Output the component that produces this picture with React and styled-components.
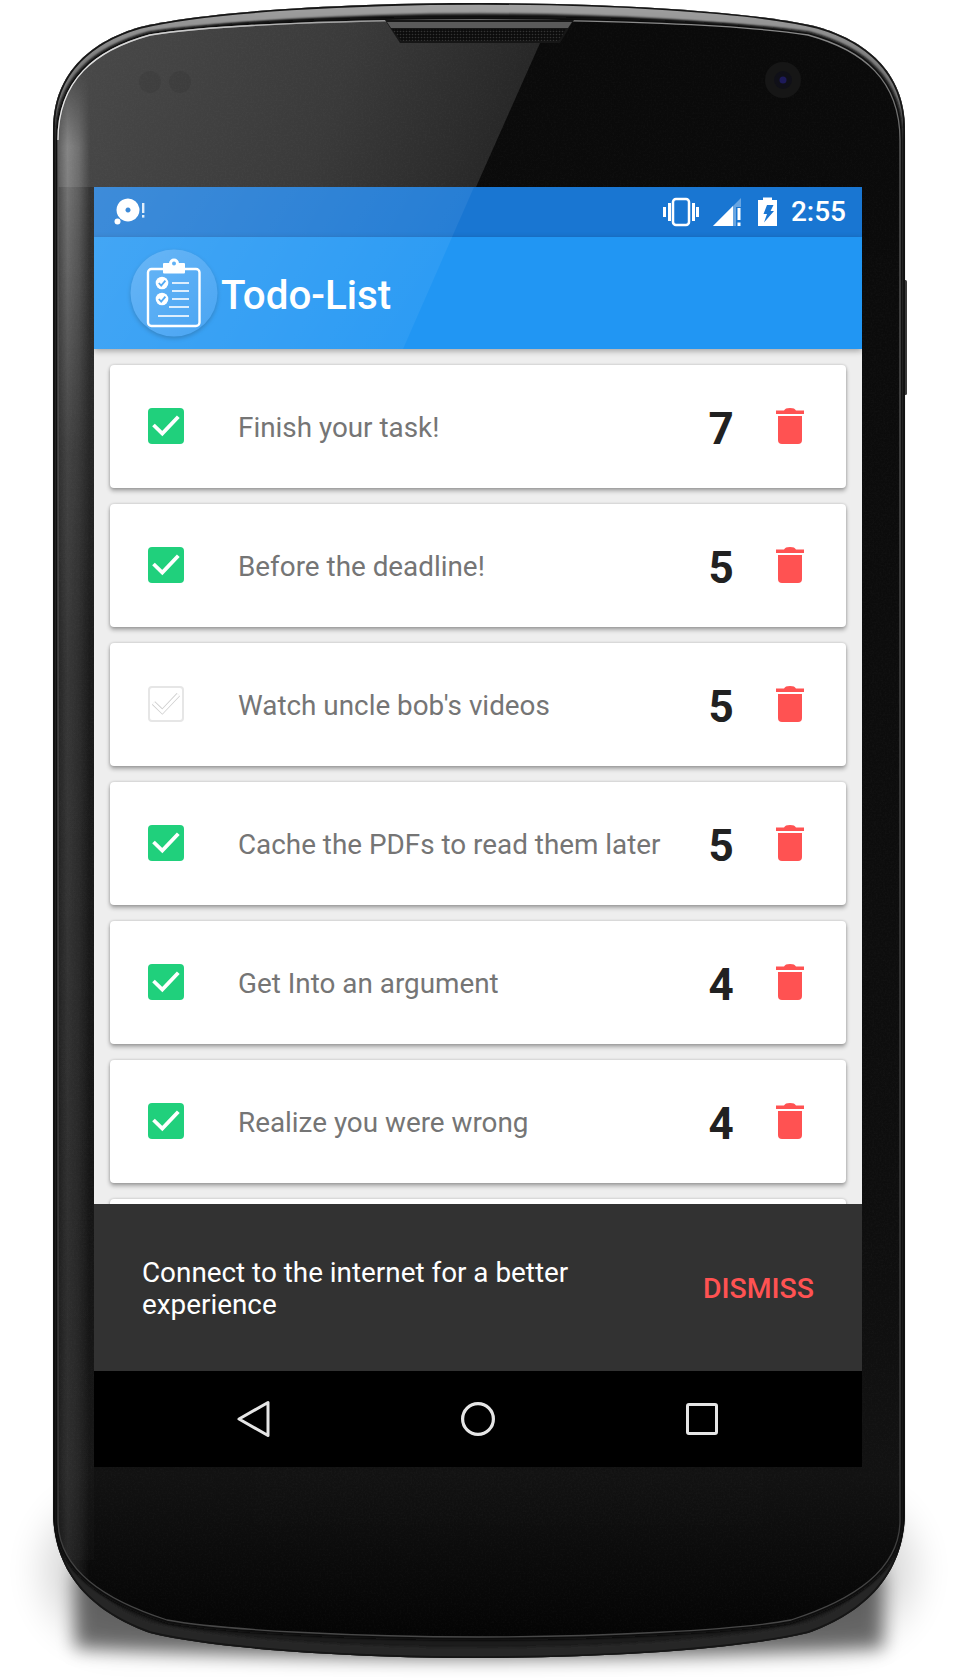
import React from "react"
import styled, { createGlobalStyle } from "styled-components";

const GlobalStyle = createGlobalStyle`
    html, body {
        margin:0;
        padding:0;
        background:white;
        font-family:Roboto, "Liberation Sans", sans-serif;
    }
`

const Stage = styled.div`
    position:relative;
    width:958px;
    height:1678px;
    padding:187px 0 0 94px;
    box-sizing:border-box;
    overflow:hidden;
`

const ShellDrawing = styled.svg`
    position:absolute;
    left:0;
    top:0;
`

const Screen = styled.div`
    position:relative;
    display:flex;
    flex-direction:column;
    width:768px;
    height:1280px;
    overflow:hidden;
    background:#eeeeee;
`

const Glare = styled.svg`
    position:absolute;
    left:0;
    top:0;
    z-index:3;
    pointer-events:none;
`

const StatusBar = styled.div`
    display:flex;
    align-items:center;
    justify-content:space-between;
    flex:0 0 50px;
    background:#1976d2;
    padding:0 16px 0 19px;
`

const StatusRight = styled.div`
    display:flex;
    align-items:center;
    gap:${props => props.$gap || 0}px;
`

const SignalGroup = styled.div`
    display:flex;
    align-items:center;
    gap:17px;
    margin-left:14px;
`

const Clock = styled.span`
    color:white;
    font-size:28px;
    font-weight:500;
    line-height:50px;
    margin-left:14px;
`

const AppBar = styled.div`
    position:relative;
    z-index:2;
    display:flex;
    align-items:center;
    flex:0 0 112px;
    background:#2196f3;
    padding-left:36px;
    box-shadow:0 2px 6px rgba(0,0,0,0.32);
`

const Logo = styled.svg`
    flex:none;
    filter:drop-shadow(0 2px 2px rgba(0,0,0,0.22));
`

const Title = styled.h1`
    margin:5px 0 0 3px;
    color:white;
    font-size:40.3px;
    font-weight:500;
`

const TodoList = styled.div`
    flex:1;
    display:flex;
    flex-direction:column;
    gap:16px;
    padding:16px 16px 0;
    overflow:hidden;
`

const Card = styled.div`
    flex:0 0 123px;
    display:flex;
    align-items:center;
    background:white;
    border-radius:4px;
    padding:0 42px 0 38px;
    box-shadow:0 3px 4px rgba(0,0,0,0.3), 0 0 3px rgba(0,0,0,0.2);
`

const Checkbox = styled.div`
    flex:none;
    width:36px;
    height:36px;
    margin-bottom:2px;
    box-sizing:border-box;
    border-radius:4px;
    background:${props => props.$checked ? "#20d07c" : "white"};
    border:${props => props.$checked ? "none" : "2px solid #e6e6e6"};
    display:flex;
    align-items:center;
    justify-content:center;
`

const TaskText = styled.span`
    flex:1;
    margin-left:54px;
    padding-top:2px;
    color:#757575;
    font-size:27.85px;
    white-space:nowrap;
`

const Score = styled.span`
    flex:0 0 56px;
    margin-right:27px;
    text-align:center;
    color:#212121;
    font-size:44px;
    font-weight:700;
    line-height:1;
    padding-top:4px;
`

const TrashSlot = styled.div`
    display:flex;
    margin-bottom:2px;
`

const Snackbar = styled.div`
    flex:0 0 167px;
    box-sizing:border-box;
    display:flex;
    align-items:center;
    justify-content:space-between;
    background:#323232;
    padding:2px 48px 0 48px;
    position:relative;
    z-index:2;
`

const SnackText = styled.p`
    margin:0;
    width:450px;
    color:white;
    font-size:27.85px;
    line-height:32px;
`

const SnackAction = styled.span`
    color:#ff5252;
    font-size:28.4px;
    font-weight:500;
`

const NavBar = styled.div`
    flex:0 0 96px;
    display:flex;
    align-items:center;
    justify-content:center;
    gap:188px;
    background:black;
    position:relative;
    z-index:2;
`

const OUTER = "M53 130 C53 70 95 40 140 27 C210 10 360 3 479 3 C598 3 748 10 818 27 C863 40 905 70 905 130 L905 1510 C905 1580 858 1615 808 1633 C738 1650 598 1658 479 1658 C360 1658 220 1650 150 1633 C100 1615 53 1580 53 1510 Z"
const INNER = "M58 140 C58 80 95 50 150 35 C220 24 360 20 479 20 C598 20 738 24 808 35 C863 50 900 80 900 140 L900 1520 C900 1570 853 1600 791 1620 C738 1630 598 1637 479 1637 C360 1637 220 1630 167 1620 C105 1600 58 1570 58 1520 Z"

const PhoneShell = () => (
    <ShellDrawing width="958" height="1678" viewBox="0 0 958 1678">
        <defs>
            <linearGradient id="rim" gradientUnits="userSpaceOnUse" x1="0" y1="0" x2="0" y2="1658">
                <stop offset="0" stopColor="#a4a4a4" />
                <stop offset="0.04" stopColor="#7a7a7a" />
                <stop offset="0.1" stopColor="#666666" />
                <stop offset="0.7" stopColor="#4a4a4a" />
                <stop offset="0.9" stopColor="#242424" />
                <stop offset="1" stopColor="#262626" />
            </linearGradient>
            <linearGradient id="glass" gradientUnits="userSpaceOnUse" x1="0" y1="20" x2="0" y2="1637">
                <stop offset="0" stopColor="#0a0a0a" />
                <stop offset="0.75" stopColor="#0e0e0e" />
                <stop offset="0.9" stopColor="#121212" />
                <stop offset="1" stopColor="#040404" />
            </linearGradient>
            <linearGradient id="reflection" gradientUnits="userSpaceOnUse" x1="60" y1="30" x2="500" y2="190">
                <stop offset="0" stopColor="#4a4a4a" />
                <stop offset="0.6" stopColor="#3a3a3a" />
                <stop offset="1" stopColor="#262626" />
            </linearGradient>
            <linearGradient id="leftFade" gradientUnits="userSpaceOnUse" x1="0" y1="187" x2="0" y2="1560">
                <stop offset="0" stopColor="white" stopOpacity="0.17" />
                <stop offset="0.35" stopColor="white" stopOpacity="0.06" />
                <stop offset="1" stopColor="white" stopOpacity="0.015" />
            </linearGradient>
            <linearGradient id="sideBand" gradientUnits="userSpaceOnUse" x1="58" y1="0" x2="90" y2="0">
                <stop offset="0" stopColor="white" stopOpacity="0.12" />
                <stop offset="0.3" stopColor="white" stopOpacity="0.34" />
                <stop offset="0.65" stopColor="white" stopOpacity="0.22" />
                <stop offset="1" stopColor="white" stopOpacity="0" />
            </linearGradient>
            <linearGradient id="sideFade" gradientUnits="userSpaceOnUse" x1="0" y1="70" x2="0" y2="1600">
                <stop offset="0" stopColor="white" stopOpacity="0" />
                <stop offset="0.05" stopColor="white" stopOpacity="1" />
                <stop offset="0.25" stopColor="white" stopOpacity="0.4" />
                <stop offset="1" stopColor="white" stopOpacity="0.3" />
            </linearGradient>
            <linearGradient id="edgeLine" gradientUnits="userSpaceOnUse" x1="0" y1="20" x2="0" y2="1637">
                <stop offset="0" stopColor="#8c8c8c" />
                <stop offset="0.1" stopColor="#5a5a5a" />
                <stop offset="0.9" stopColor="#3a3a3a" />
                <stop offset="1" stopColor="#484848" />
            </linearGradient>
            <linearGradient id="cornerLine" gradientUnits="userSpaceOnUse" x1="58" y1="0" x2="420" y2="0">
                <stop offset="0" stopColor="#e8e8e8" />
                <stop offset="0.5" stopColor="#bdbdbd" />
                <stop offset="1" stopColor="#bdbdbd" stopOpacity="0" />
            </linearGradient>
            <mask id="sideMask">
                <rect width="958" height="1678" fill="url(#sideFade)" />
            </mask>
            <clipPath id="outerClip"><path d={OUTER} /></clipPath>
            <clipPath id="innerClip"><path d={INNER} /></clipPath>
            <filter id="soft"><feGaussianBlur stdDeviation="1.2" /></filter>
            <filter id="shadowNear" x="-10%" y="-30%" width="120%" height="160%"><feGaussianBlur stdDeviation="9" /></filter>
            <filter id="shadowFar" x="-10%" y="-30%" width="120%" height="160%"><feGaussianBlur stdDeviation="20" /></filter>
            <filter id="grain" x="0" y="0" width="100%" height="100%">
                <feTurbulence type="fractalNoise" baseFrequency="0.55" numOctaves="2" seed="4" />
                <feColorMatrix values="0 0 0 0 1  0 0 0 0 1  0 0 0 0 1  0.5 0 0 0 -0.18" />
            </filter>
            <pattern id="mesh" width="3" height="3" patternUnits="userSpaceOnUse">
                <rect width="3" height="3" fill="#0c0c0c" />
                <circle cx="1.5" cy="1.5" r="0.8" fill="#333" />
            </pattern>
        </defs>

        <rect x="45" y="1500" width="868" height="140" rx="70" fill="black" opacity="0.16" filter="url(#shadowFar)" />
        <path d="M75 1570 H883 V1648 Q479 1668 75 1648 Z" fill="black" opacity="0.55" filter="url(#shadowNear)" />

        <rect x="903" y="280" width="4" height="115" rx="1.5" fill="#3c3c3c" />

        <path d={OUTER} fill="#1c1c1c" />
        <g clipPath="url(#outerClip)">
            <path d={OUTER} fill="none" stroke="url(#rim)" strokeWidth="21" filter="url(#soft)" />
            <path d={OUTER} fill="none" stroke="#161616" strokeWidth="3.5" />
        </g>
        <path d={INNER} fill="none" stroke="#080808" strokeWidth="7" filter="url(#soft)" />
        <path d={INNER} fill="url(#glass)" />

        <g clipPath="url(#innerClip)">
            <polygon points="0,0 540,0 540,43 476,187 0,187" fill="url(#reflection)" />
            <rect x="58" y="187" width="36" height="1373" fill="url(#leftFade)" />
            <rect x="58" y="0" width="34" height="1660" fill="url(#sideBand)" mask="url(#sideMask)" />
            <rect x="58" y="20" width="842" height="1617" filter="url(#grain)" opacity="0.1" />
        </g>
        <path d={INNER} fill="none" stroke="url(#edgeLine)" strokeWidth="1.3" />
        <path d="M58 140 C58 80 95 50 150 35 C220 24 360 20 479 20" fill="none" stroke="url(#cornerLine)" strokeWidth="1.3" />

        <path d="M385 20 H574 L560 43 H400 Z" fill="#161616" />
        <path d="M387 22 H572 L568 28 H391 Z" fill="#5a5a5a" />
        <path d="M392 29 H566 L559 41 H401 Z" fill="url(#mesh)" />

        <circle cx="150" cy="82" r="11" fill="black" opacity="0.07" />
        <circle cx="180" cy="82" r="11" fill="black" opacity="0.07" />
        <circle cx="783" cy="80" r="18" fill="#161616" />
        <circle cx="783" cy="80" r="9" fill="#101018" />
        <circle cx="783" cy="80" r="3.5" fill="#1d1a5a" />
    </ShellDrawing>
)

const ScreenGlare = () => (
    <Glare width="768" height="162" viewBox="0 0 768 162">
        <defs>
            <linearGradient id="glareFill" x1="0" y1="0" x2="1" y2="0.25">
                <stop offset="0" stopColor="white" stopOpacity="0.16" />
                <stop offset="1" stopColor="white" stopOpacity="0.055" />
            </linearGradient>
        </defs>
        <polygon points="0,0 380,0 309,162 0,162" fill="url(#glareFill)" />
    </Glare>
)

const DiscAlert = () => (
    <svg width="36" height="36" viewBox="0 -3 36 36">
        <path fillRule="evenodd" fill="white" d="M15 1.5a11.5 11.5 0 1 1 -10 17.2 a11.5 11.5 0 0 1 10 -17.2 Z M15 10.5a2.5 2.5 0 1 0 0.01 0 Z" />
        <circle cx="4.5" cy="24.5" r="3" fill="white" />
        <rect x="29" y="6" width="2.4" height="10" fill="#dcebf9" />
        <rect x="29" y="18" width="2.4" height="2.6" fill="#dcebf9" />
    </svg>
)

const VibrateIcon = () => (
    <svg width="36" height="30" viewBox="0 0 36 30">
        <rect x="0" y="10" width="3" height="10" fill="white" />
        <rect x="5" y="6" width="3" height="18" fill="white" />
        <rect x="10" y="2" width="16" height="26" rx="3" fill="none" stroke="white" strokeWidth="2.5" />
        <rect x="29" y="6" width="3" height="18" fill="white" />
        <rect x="33" y="10" width="3" height="10" fill="white" />
    </svg>
)

const SignalIcon = () => (
    <svg width="28" height="30" viewBox="0 0 28 30">
        <polygon points="0,29 28,1 28,10 23,10 23,29" fill="white" opacity="0.35" />
        <polygon points="0,29 20,9 20,29" fill="white" />
        <rect x="24.5" y="11" width="3" height="12" fill="white" />
        <rect x="24.5" y="25.5" width="3" height="3.5" fill="white" />
    </svg>
)

const BatteryIcon = () => (
    <svg width="19" height="30" viewBox="0 0 19 30">
        <path fill="white" d="M5 0.5 H14 V3 H19 V29 H0 V3 H5 Z" />
        <path fill="#1976d2" d="M9 8 H15.5 L12.5 14 H16 L6 25.5 L9 17 H5.5 Z" />
    </svg>
)

const AppLogo = () => (
    <Logo width="88" height="88" viewBox="0 0 88 88">
        <defs>
            <linearGradient id="logoFill" x1="0" y1="0" x2="0.7" y2="1">
                <stop offset="0" stopColor="#50aaf5" />
                <stop offset="1" stopColor="#379cf2" />
            </linearGradient>
        </defs>
        <circle cx="44" cy="44" r="43.5" fill="url(#logoFill)" />
        <rect x="18" y="20" width="51.5" height="57" rx="3.5" fill="none" stroke="white" strokeWidth="2.4" />
        <rect x="33" y="14" width="22" height="10.5" rx="1" fill="white" />
        <circle cx="44" cy="14.5" r="5" fill="white" />
        <circle cx="44" cy="14.5" r="2" fill="#4aa6f4" />
        <circle cx="32" cy="34" r="6.3" fill="white" />
        <polyline points="28.8,34 31.2,36.6 35.4,31.6" fill="none" stroke="#3d9ff2" strokeWidth="1.8" />
        <circle cx="32" cy="50" r="6.3" fill="white" />
        <polyline points="28.8,50 31.2,52.6 35.4,47.6" fill="none" stroke="#3d9ff2" strokeWidth="1.8" />
        <g stroke="white" strokeWidth="1.6">
            <line x1="42" y1="34" x2="59" y2="34" />
            <line x1="42" y1="42" x2="59" y2="42" />
            <line x1="42" y1="50" x2="59" y2="50" />
            <line x1="39" y1="58" x2="59" y2="58" />
            <line x1="28" y1="67" x2="59" y2="67" />
        </g>
    </Logo>
)

const CheckMark = ({ checked }) => checked ? (
    <svg width="36" height="36" viewBox="0 0 36 36">
        <polyline points="5.5,17 14.3,25.6 30.3,8.7" fill="none" stroke="white" strokeWidth="3.8" />
    </svg>
) : (
    <svg width="32" height="32" viewBox="0 0 32 32">
        <polyline points="3.5,15 12.3,23.5 28.3,6.7" fill="none" stroke="#cfcfcf" strokeWidth="4.6" />
        <polyline points="3.5,15 12.3,23.5 28.3,6.7" fill="none" stroke="white" strokeWidth="3" />
    </svg>
)

const TrashIcon = () => (
    <svg width="28" height="36" viewBox="0 0 28 36">
        <path fill="#ff5252" d="M0 2.5 H8 C9 0.8 10.5 0 14 0 C17.5 0 19 0.8 20 2.5 H28 V6 H0 Z" />
        <path fill="#ff5252" d="M2 8 H26 V32 A4 4 0 0 1 22 36 H6 A4 4 0 0 1 2 32 Z" />
    </svg>
)

const BackIcon = () => (
    <svg width="36" height="38" viewBox="0 0 36 38">
        <path d="M32 2.5 V35.5 L3 19 Z" fill="none" stroke="#e6e6e6" strokeWidth="3" strokeLinejoin="round" />
    </svg>
)

const HomeIcon = () => (
    <svg width="36" height="36" viewBox="0 0 36 36">
        <circle cx="18" cy="18" r="15.4" fill="none" stroke="#e6e6e6" strokeWidth="3.2" />
    </svg>
)

const RecentIcon = () => (
    <svg width="36" height="36" viewBox="0 0 36 36">
        <rect x="3.5" y="3.5" width="29" height="29" rx="1.5" fill="none" stroke="#e6e6e6" strokeWidth="3" />
    </svg>
)

const tasks = [
    { text: "Finish your task!", score: 7, done: true },
    { text: "Before the deadline!", score: 5, done: true },
    { text: "Watch uncle bob's videos", score: 5, done: false },
    { text: "Cache the PDFs to read them later", score: 5, done: true },
    { text: "Get Into an argument", score: 4, done: true },
    { text: "Realize you were wrong", score: 4, done: true },
]

const App = () => {

    const loadTasks = () => {
        let views = [];
        tasks.forEach(task => {
            views.push(
                <Card key={task.text}>
                    <Checkbox $checked={task.done}>
                        <CheckMark checked={task.done} />
                    </Checkbox>
                    <TaskText>{task.text}</TaskText>
                    <Score>{task.score}</Score>
                    <TrashSlot>
                        <TrashIcon />
                    </TrashSlot>
                </Card>
            )
        })
        return views;
    }

    return (
        <Stage>
            <GlobalStyle />
            <PhoneShell />
            <Screen>
                <ScreenGlare />
                <StatusBar>
                    <DiscAlert />
                    <StatusRight>
                        <VibrateIcon />
                        <SignalGroup>
                            <SignalIcon />
                            <BatteryIcon />
                        </SignalGroup>
                        <Clock>2:55</Clock>
                    </StatusRight>
                </StatusBar>
                <AppBar>
                    <AppLogo />
                    <Title>Todo-List</Title>
                </AppBar>
                <TodoList>
                    {loadTasks()}
                    <Card />
                </TodoList>
                <Snackbar>
                    <SnackText>Connect to the internet for a better experience</SnackText>
                    <SnackAction>DISMISS</SnackAction>
                </Snackbar>
                <NavBar>
                    <BackIcon />
                    <HomeIcon />
                    <RecentIcon />
                </NavBar>
            </Screen>
        </Stage>
    );
};

export default App;
